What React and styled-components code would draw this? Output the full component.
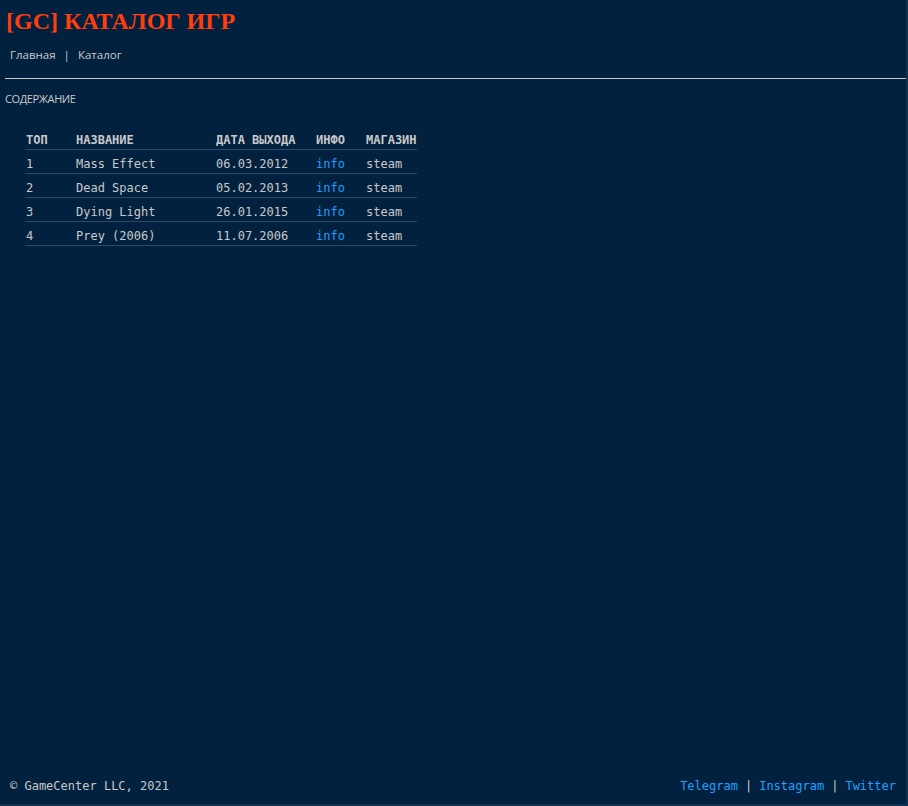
import React from "react";
import styled, { createGlobalStyle } from "styled-components";

const Global = createGlobalStyle`
  html, body { margin: 0; padding: 0; background: #01213f; }
  body { color: #c9c9c9; }
  * { box-sizing: border-box; }
`;

const Page = styled.div`
  min-height: 100vh;
  display: flex;
  flex-direction: column;
  align-items: stretch;
  padding: 0 0 0 5px;
  border-right: 2px solid #0f3252;
  border-bottom: 2px solid #0f3252;
`;

const Title = styled.h1`
  margin: 6px 0 0 1px;
  font-family: "Liberation Serif", "Times New Roman", serif;
  font-weight: bold;
  font-size: 24px;
  line-height: 30px;
  color: #ff3d0d;
`;

const Nav = styled.nav`
  display: flex;
  align-items: center;
  gap: 8px;
  margin: 10px 0 0 5px;
  font-family: "Open Sans", "Noto Sans", sans-serif;
  font-size: 11.5px;
  line-height: 18px;
  height: 18px;
`;

const NavLink = styled.a`
  color: #c9c9c9;
  text-decoration: none;
`;

const Sep = styled.span`
  color: #c9c9c9;
`;

const Rule = styled.hr`
  margin: 14px 0 0 0;
  border: none;
  border-top: 1px solid #c8c8c8;
  height: 0;
`;

const Section = styled.div`
  margin-top: 12px;
  font-family: "Open Sans", "Noto Sans", sans-serif;
  font-size: 11px;
  letter-spacing: -0.4px;
  line-height: 16px;
`;

const Table = styled.table`
  align-self: flex-start;
  margin: 23px 0 0 20px;
  border-collapse: collapse;
  font-family: "DejaVu Sans Mono", "Liberation Mono", monospace;
  font-size: 12px;
  line-height: 16px;
`;

const Th = styled.th`
  text-align: left;
  font-weight: bold;
  padding: 2px 0 1px 1px;
  width: ${(p) => p.$w || "auto"};
  border-bottom: 1px solid #2b4a6a;
  color: #c9c9c9;
  white-space: nowrap;
`;

const Td = styled.td`
  padding: 6px 0 1px 1px;
  border-bottom: 1px solid #2b4a6a;
  color: #c9c9c9;
  white-space: nowrap;
`;

const Link = styled.a`
  color: #1ea1ff;
  text-decoration: none;
`;

const Footer = styled.footer`
  margin-top: auto;
  display: flex;
  justify-content: space-between;
  align-items: center;
  padding: 0 10px 10px 5px;
  font-family: "DejaVu Sans Mono", "Liberation Mono", monospace;
  font-size: 12px;
  line-height: 16px;
`;

const Links = styled.div`
  display: flex;
  gap: 7px;
`;

const games = [
  ["1", "Mass Effect", "06.03.2012"],
  ["2", "Dead Space", "05.02.2013"],
  ["3", "Dying Light", "26.01.2015"],
  ["4", "Prey (2006)", "11.07.2006"],
];

export default function App() {
  return (
    <>
      <Global />
      <Page>
        <Title>[GC] КАТАЛОГ ИГР</Title>
        <Nav>
          <NavLink href="#">Главная</NavLink>
          <Sep>|</Sep>
          <NavLink href="#">Каталог</NavLink>
        </Nav>
        <Rule />
        <Section>СОДЕРЖАНИЕ</Section>
        <Table>
          <thead>
            <tr>
              <Th $w="50px">ТОП</Th>
              <Th $w="140px">НАЗВАНИЕ</Th>
              <Th $w="100px">ДАТА ВЫХОДА</Th>
              <Th $w="50px">ИНФО</Th>
              <Th>МАГАЗИН</Th>
            </tr>
          </thead>
          <tbody>
            {games.map(([n, name, date]) => (
              <tr key={n}>
                <Td>{n}</Td>
                <Td>{name}</Td>
                <Td>{date}</Td>
                <Td>
                  <Link href="#">info</Link>
                </Td>
                <Td>steam</Td>
              </tr>
            ))}
          </tbody>
        </Table>
        <Footer>
          <span>© GameCenter LLC, 2021</span>
          <Links>
            <Link href="#">Telegram</Link>
            <span>|</span>
            <Link href="#">Instagram</Link>
            <span>|</span>
            <Link href="#">Twitter</Link>
          </Links>
        </Footer>
      </Page>
    </>
  );
}
